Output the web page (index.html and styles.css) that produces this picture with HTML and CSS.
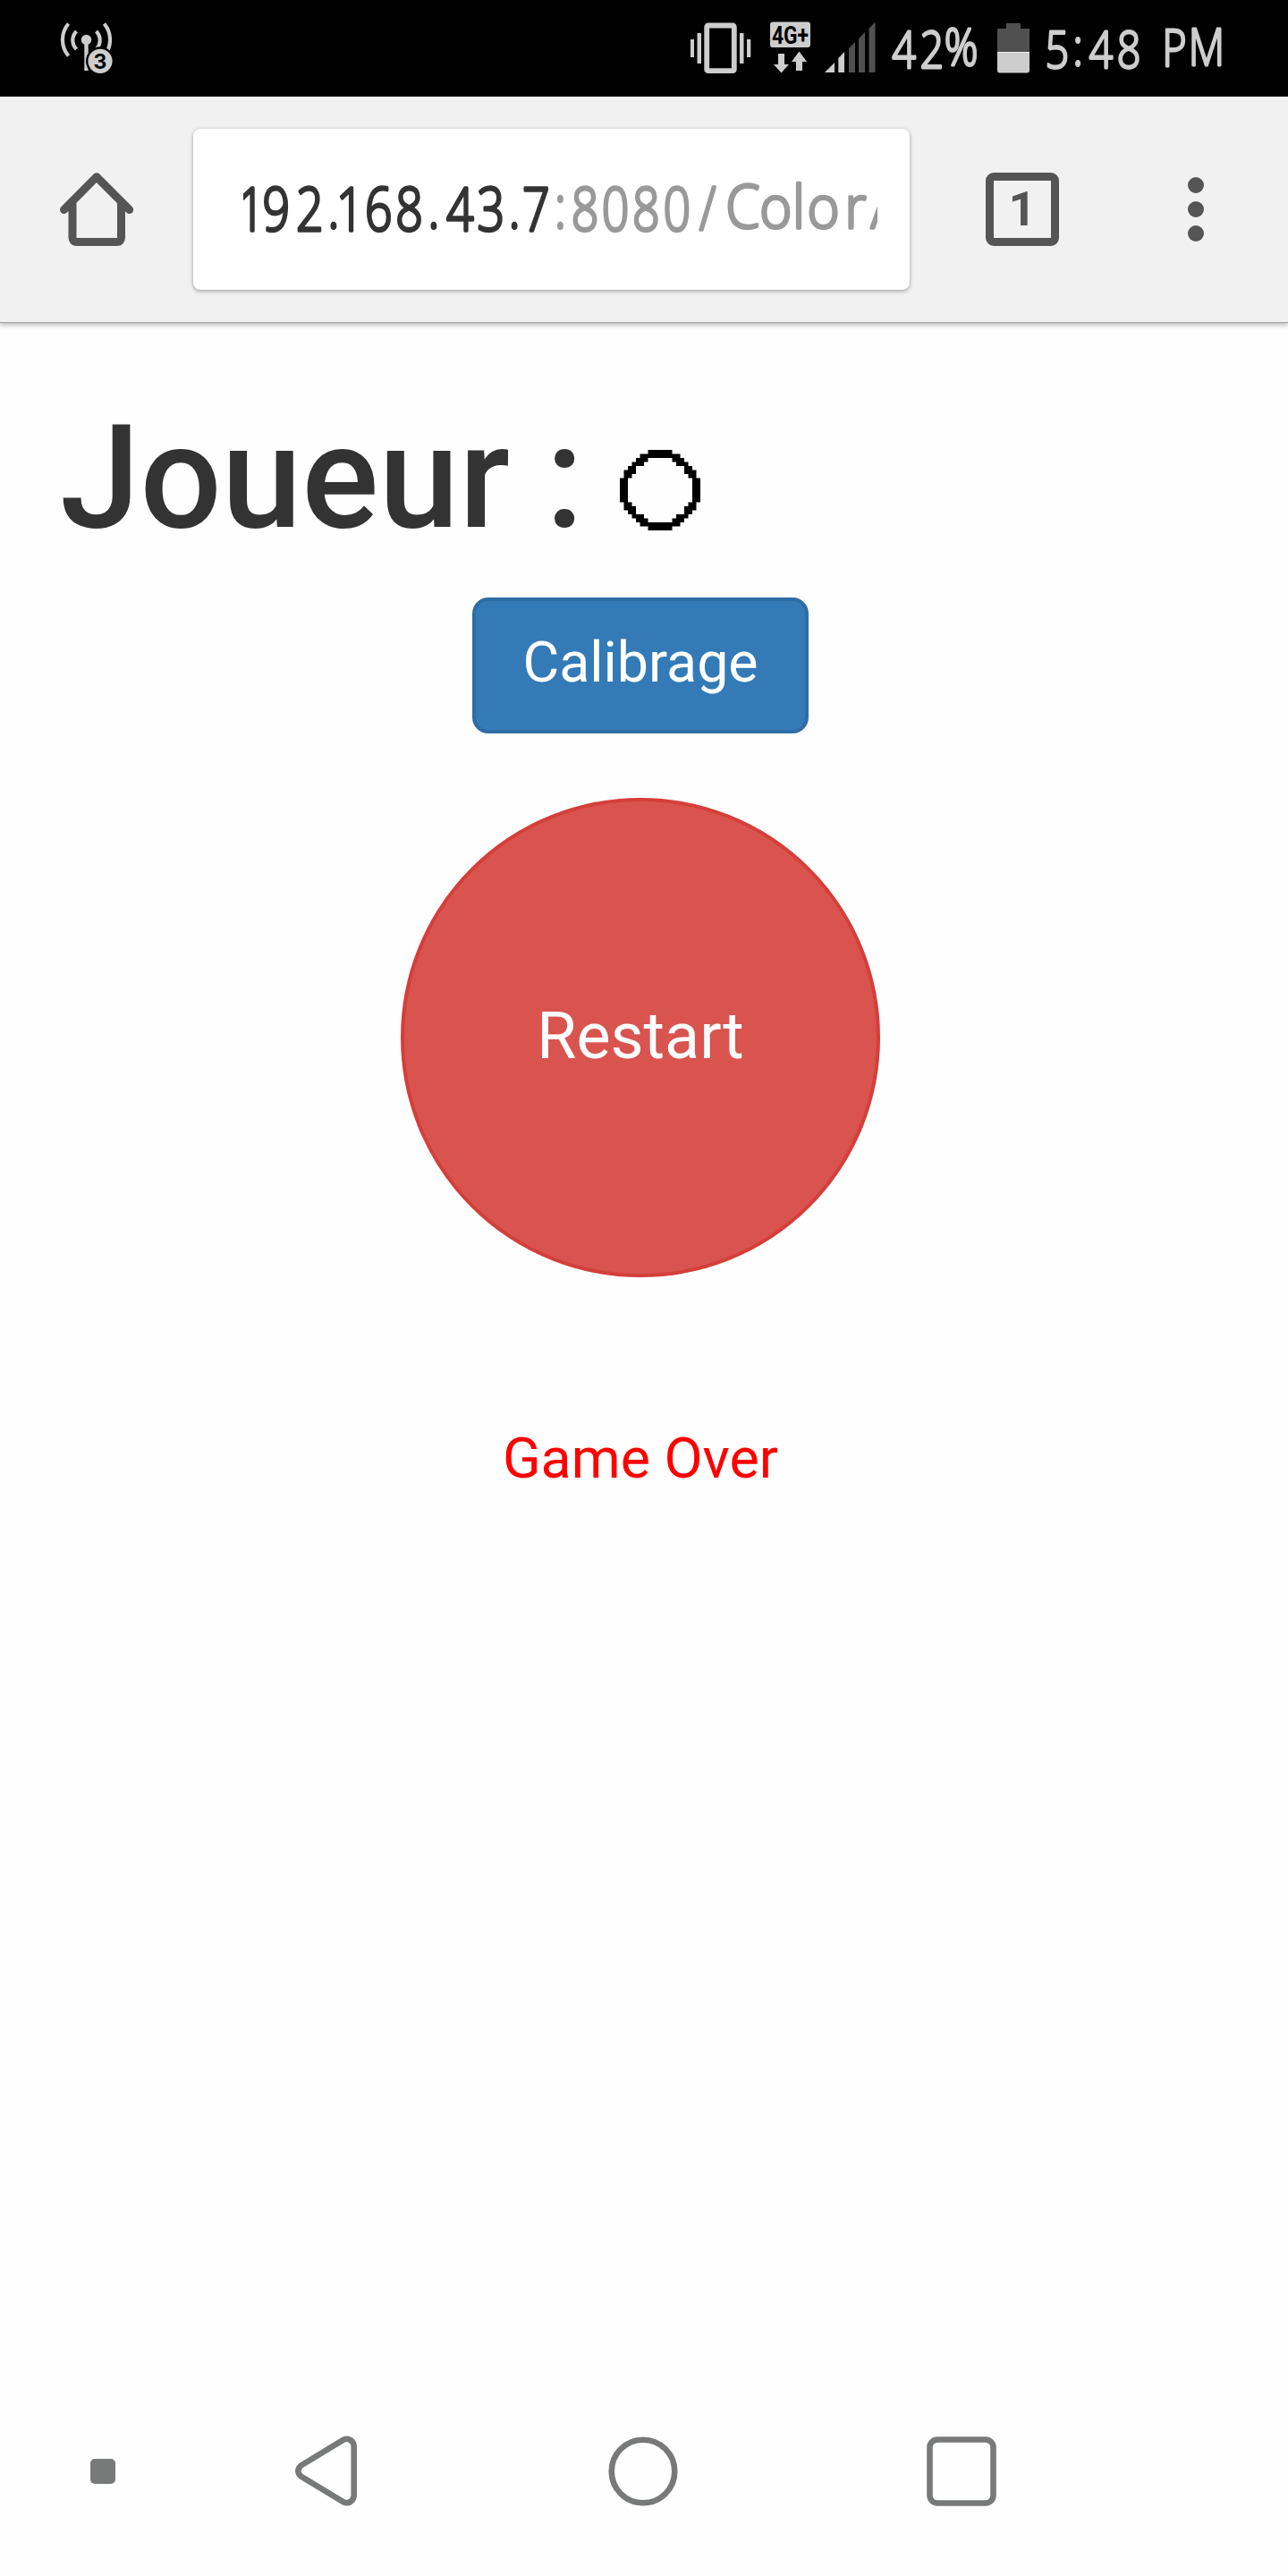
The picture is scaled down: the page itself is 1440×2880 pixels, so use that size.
FILE: index.html
```html
<!DOCTYPE html>
<html lang="fr">
<head>
<meta charset="utf-8">
<title>Joueur</title>
<link rel="stylesheet" href="styles.css">
</head>
<body>
<header class="status">
  <svg class="status-hotspot" viewBox="66 0 62 108" width="62" height="108">
    <g class="arc">
      <path d="M76.5 26.500A28 28 0 0 0 76.500 62.500"/>
      <path d="M85.500 35A14 14 0 0 0 85.500 55"/>
      <path d="M107.500 35A14 14 0 0 1 107.500 55"/>
      <path d="M116.500 26.500A28 28 0 0 1 116.500 62.500"/>
    </g>
    <circle cx="96.500" cy="44.500" r="5.700" fill="#cdcdcd"/>
    <path d="M94.300 46h4.400v33h-4.400z" fill="#cdcdcd"/>
    <circle cx="112" cy="68.300" r="16" fill="#000"/>
    <circle cx="112" cy="68.300" r="13.600" fill="#cdcdcd"/>
    <text class="badge-num" x="112" y="76.500">3</text>
  </svg>
  <div class="status-right">
    <svg viewBox="771 0 69 108" width="69" height="108" fill="#cdcdcd">
      <rect x="772" y="44" width="4" height="20"/><rect x="779.500" y="37" width="4.500" height="34"/>
      <rect x="790.200" y="28.500" width="30.600" height="50.700" rx="1.500" fill="none" stroke="#cdcdcd" stroke-width="5.800"/>
      <rect x="827" y="37" width="4.500" height="34"/><rect x="835" y="44" width="4.300" height="20"/>
    </svg>
    <svg viewBox="861 0 45 108" width="45" height="108" fill="#cdcdcd">
      <rect x="861" y="24.500" width="45" height="28.500" rx="3"/>
      <text class="network" x="863" y="48.500" textLength="41" lengthAdjust="spacingAndGlyphs">4G+</text>
      <path d="M870 60h7v12h5l-8.500 9.500-8.500-9.500h5zM890 79h7V69h5l-8.500-11.500L885 69h5z"/>
    </svg>
    <svg viewBox="922 0 57 108" width="57" height="108" fill="#505050">
      <path d="M922 81l11-11v11zM937.300 81V65l6.700-7v23z" fill="#cdcdcd"/>
      <path d="M949 81V54l7-7v34zM960 81V43l7-7v45zM971.500 81V32l7-7.500V81z"/>
    </svg>
    <svg class="status-text" viewBox="995 0 98 108" width="98" height="108">
      <text transform="translate(995 0) scale(.82 1)" x="19 57 97" y="76 76 73">42%</text>
    </svg>
    <svg viewBox="1115 0 36 108" width="36" height="108">
      <path d="M1125 26h16v6h10v26h-36V32h10z" fill="#505050"/>
      <path d="M1115 58h36v20.500q0 3-3 3h-30q-3 0-3-3z" fill="#cdcdcd"/>
      <path d="M1115 58h36v1h-36z" fill="#eee"/>
    </svg>
    <svg class="status-text" viewBox="1167 0 205 108" width="205" height="108">
      <text transform="translate(1167 0) scale(.82 1)" x="18 46.500 78 116 143 178 222" y="76 73 76 76 76 74 73">5:48 PM</text>
    </svg>
  </div>
</header>

<nav class="toolbar">
  <svg class="home" viewBox="66 192 84 84" width="84" height="84">
    <path d="M71.500 234.500L108 197.700l36.700 36.800M81 226v39.500q0 5 5 5h44.500q5 0 5-5V226"/>
  </svg>
  <div class="omnibox">
    <svg class="url" viewBox="0 0 709 180" width="709" height="180">
      <text transform="scale(.8 1)"><tspan class="host" x="11 46 93 126 149 189 232 266 303 346 379 409" y="114 114 114 111 114 114 114 111 114 114 111 114">192.168.43.7</tspan><tspan class="path" x="443 477.500 520 563 606 649" y="111 114 114 114 114 113">:8080/</tspan></text>
      <text transform="scale(.92 1)" class="path" x="607 647 675 705 744 783" y="111">ColorA</text>
    </svg>
  </div>
  <div class="tabs">1</div>
  <svg class="menu" viewBox="0 0 18 72" width="18" height="72" fill="#555"><circle cx="9" cy="9" r="9"/><circle cx="9" cy="36" r="9"/><circle cx="9" cy="63" r="9"/></svg>
</nav>

<main class="page">
  <h1 class="title"><span>Joueur :</span>
    <svg class="pawn" viewBox="0 0 20 20" width="90" height="90">
      <path d="M7 0h6v1h-6zM5 1h10v1H5zM4 2h3v1H4zM13 2h3v1h-3zM3 3h3v1H3zM14 3h3v1h-3zM2 4h2v1H2zM16 4h2v1h-2zM1 5h3v1H1zM16 5h3v1h-3zM1 6h2v1H1zM17 6h2v1h-2zM0 7h2v6H0zM18 7h2v6h-2zM1 13h2v1H1zM17 13h2v1h-2zM1 14h3v1H1zM16 14h3v1h-3zM2 15h2v1H2zM16 15h2v1h-2zM3 16h3v1H3zM14 16h3v1h-3zM4 17h3v1H4zM13 17h3v1h-3zM5 18h10v1H5zM7 19h6v1H7z"/>
    </svg>
  </h1>
  <button class="btn calibrate">Calibrage</button>
  <button class="btn restart">Restart</button>
  <p class="message">Game Over</p>
</main>

<footer class="navbar">
  <svg class="nav-dot" viewBox="0 0 28 28" width="28" height="28"><rect width="28" height="28" rx="5" fill="#787a79"/></svg>
  <svg class="nav-back" viewBox="330 2723 70 80" width="70" height="80"><path d="M336.500 2756.500L384 2727.700C389.500 2725 395.700 2729 395.700 2735V2790C395.700 2796 389.500 2800 384 2797.300L336.500 2768.500C332.300 2765 332.300 2760 336.500 2756.500Z"/></svg>
  <svg class="nav-home" viewBox="0 0 78 78" width="78" height="78"><circle cx="39" cy="39" r="35.300"/></svg>
  <svg class="nav-recent" viewBox="0 0 78 78" width="78" height="78"><rect x="3.500" y="3.500" width="71" height="71" rx="8.500"/></svg>
</footer>
</body>
</html>
```
FILE: styles.css
```css
* { box-sizing: border-box; }
body {
  margin: 0;
  width: 1440px;
  height: 2880px;
  display: flex;
  flex-direction: column;
  background: #fefefe;
  font-family: Roboto, sans-serif;
  overflow: hidden;
}
svg { display: block; flex: none; }

.status {
  height: 108px;
  flex: none;
  display: flex;
  justify-content: space-between;
  padding: 0 68px 0 66px;
  background: #000;
}
.status-right { display: flex; }
.status-right svg:nth-child(2) { margin-left: 21px; }
.status-right svg:nth-child(3) { margin-left: 16px; }
.status-right svg:nth-child(4) { margin-left: 16px; }
.status-right svg:nth-child(5) { margin-left: 22px; }
.status-right svg:nth-child(6) { margin-left: 16px; }
.arc { fill: none; stroke: #cdcdcd; stroke-width: 4.2; }
.badge-num { font: 700 23px Inter, sans-serif; text-anchor: middle; fill: #000; }
.network { font: 700 27px Roboto, sans-serif; fill: #000; }
.status-text text, .url text {
  font-family: "Open Sans", sans-serif;
  font-weight: 300;
  text-anchor: middle;
  stroke-linejoin: round;
}
.status-text { overflow: visible; }
.status-text text { font-size: 57px; fill: #cdcdcd; stroke: #cdcdcd; stroke-width: 2.8px; }

.toolbar {
  height: 252px;
  flex: none;
  display: flex;
  align-items: center;
  padding: 0 94px 0 66px;
  background: #f1f1f1;
  box-shadow: 0 1px 1px #aaa, 0 3px 6px rgba(0, 0, 0, .3);
}
.home path { fill: none; stroke: #555; stroke-width: 9; stroke-linecap: round; stroke-linejoin: round; }
.omnibox {
  width: 801px;
  height: 180px;
  margin-left: 66px;
  padding-left: 56px;
  background: #fff;
  border-radius: 8px;
  box-shadow: 0 2px 4px rgba(0, 0, 0, .26), 0 0 4px rgba(0, 0, 0, .12);
}
.url { overflow: hidden; }
.url text { font-size: 67px; stroke-width: 3.4px; }
.url .host { fill: #333; stroke: #333; }
.url .path { fill: #999; stroke: #999; }
.tabs {
  width: 82px;
  height: 82px;
  margin-left: 85px;
  border: 9px solid #555;
  border-radius: 9px;
  color: #555;
  font-size: 54px;
  font-weight: 700;
  line-height: 64px;
  text-align: center;
}
.menu { margin-left: auto; margin-right: 0; }

.page { flex: 1; display: flex; flex-direction: column; align-items: center; padding-right: 8px; }
.title {
  align-self: stretch;
  height: 308px;
  margin: 0;
  padding: 76px 0 0 67px;
  display: flex;
  color: #333;
  font-size: 161px;
  font-weight: 500;
  line-height: 196px;
  white-space: nowrap;
}
.title span { width: 626px; }
.pawn { margin-top: 67px; }
.btn { padding: 0; color: #fff; font-family: inherit; text-align: center; }
.calibrate {
  width: 376px;
  height: 152px;
  padding-bottom: 7px;
  border: 4px solid #2e6da4;
  border-radius: 18px;
  background: #337ab7;
  font-size: 62.7px;
}
.restart {
  width: 536px;
  height: 536px;
  margin-top: 72px;
  padding-bottom: 4px;
  border: 4px solid #d43f3a;
  border-radius: 50%;
  background: #d9534f;
  font-size: 71.8px;
}
.message { margin: 165px 0 0; color: #f00; font-size: 62.7px; line-height: 76px; }

.navbar { height: 234px; flex: none; display: flex; align-items: center; padding-left: 101px; }
.navbar path, .navbar circle, .nav-recent rect { fill: none; stroke: #787a79; stroke-width: 6.6; }
.nav-back { margin-left: 201px; }
.nav-home { margin-left: 280px; }
.nav-recent { margin-left: 278px; }
```
